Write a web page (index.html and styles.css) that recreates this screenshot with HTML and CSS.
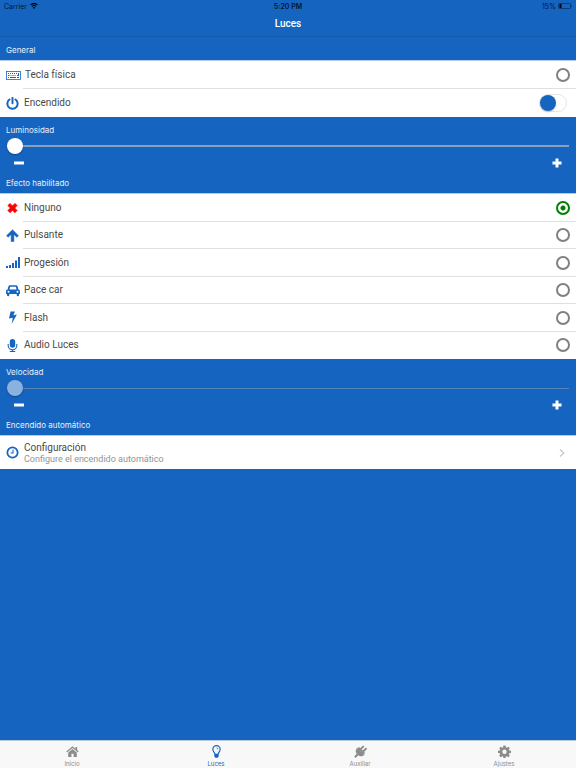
FILE: index.html
```
<!DOCTYPE html>
<html lang="es">
<head>
  <meta charset="utf-8">
  <meta name="viewport" content="width=device-width, initial-scale=1">
  <title>Luces</title>
  <link rel="stylesheet" href="styles.css">
</head>
<body>

  <header class="header">
    <div class="status-bar">
      <span class="status-left">Carrier
        <svg class="wifi" viewBox="0 0 16 12"><path d="M8 12l2.500-3a4 4 0 0 0-5 0zM4.300 7.600a6 6 0 0 1 7.400 0l1.400-1.700a8.200 8.200 0 0 0-10.200 0zM1.900 4.700a10 10 0 0 1 12.200 0L15.600 2.900a12 12 0 0 0-15.200 0z"/></svg>
      </span>
      <span class="status-time">5:20 PM</span>
      <span class="status-right">15%
        <svg class="battery" viewBox="0 0 28 12"><rect x="1" y="1" width="24" height="10" rx="2" fill="none" stroke="#0a2c57" stroke-width="1.400"/><rect x="3" y="2" width="4" height="8" fill="#000"/><path d="M26 4q2 2 0 4z"/></svg>
      </span>
    </div>
    <h1 class="title">Luces</h1>
  </header>

  <main class="content">
    <h2 class="list-header">General</h2>
    <div class="list list-general">
      <div class="item">
        <svg class="icon icon-keyboard" viewBox="0 0 30 18"><rect x="1" y="1" width="28" height="16" fill="none" stroke="#1565c0" stroke-width="1.600"/><path d="M4 4h2v2H4zM8 4h2v2H8zM12 4h2v2h-2zM16 4h2v2h-2zM20 4h2v2h-2zM24 4h2v6h-4V8h2zM4 8h3v2H4zM9 8h2v2H9zM13 8h2v2h-2zM17 8h2v2h-2zM4 12h2v2H4zM8 12h12v2H8zM22 12h4v2h-4z"/></svg>
        <label class="label" for="fisica">Tecla física</label>
        <input type="radio" class="radio" id="fisica" name="tecla">
      </div>
      <div class="item">
        <svg class="icon" viewBox="0 0 24 24"><path d="M6.500 4.500a9.500 9.500 0 1 0 11 0M12 1.500v10" fill="none" stroke="#1565c0" stroke-width="3.600" stroke-linecap="round"/></svg>
        <label class="label" for="encendido">Encendido</label>
        <input type="checkbox" class="toggle" id="encendido">
      </div>
    </div>

    <h2 class="list-header list-header-range"><label for="luminosidad">Luminosidad</label></h2>
    <div class="range">
      <input type="range" class="slider" id="luminosidad" min="0" max="100" value="0">
      <div class="range-buttons">
        <button type="button" class="step" aria-label="Menos"><svg viewBox="0 0 10 10"><path d="M0 3.500h10v3H0z"/></svg></button>
        <button type="button" class="step" aria-label="Más"><svg viewBox="0 0 10 10"><path d="M3.500.5h3v3h3v3h-3v3h-3v-3h-3v-3h3z"/></svg></button>
      </div>
    </div>

    <h2 class="list-header">Efecto habilitado</h2>
    <div class="list list-effects">
      <div class="item">
        <svg class="icon icon-red" viewBox="0 0 24 24"><path d="M3.500 8.500l4-4L12 9l4.500-4.500 4 4L16 13l4.500 4.500-4 4L12 17l-4.500 4.500-4-4L8 13z" stroke="#f00" stroke-width="1.500" stroke-linejoin="round"/></svg>
        <label class="label" for="ninguno">Ninguno</label>
        <input type="radio" class="radio" id="ninguno" name="efecto" checked>
      </div>
      <div class="item">
        <svg class="icon" viewBox="0 0 24 24"><path d="M12 1.500L23 12.300l-2.800 2.900-5.700-5.200V23h-5V10l-5.700 5.200L1 12.300z" stroke="#1565c0" stroke-linejoin="round"/></svg>
        <label class="label" for="pulsante">Pulsante</label>
        <input type="radio" class="radio" id="pulsante" name="efecto">
      </div>
      <div class="item">
        <svg class="icon icon-wide" viewBox="0 0 28 24"><path d="M0 19h4v4H0zM6 17h4v6H6zM12 13h4v10h-4zM18 8h4v15h-4zM24 1h4v22h-4z"/></svg>
        <label class="label" for="progresion">Progesión</label>
        <input type="radio" class="radio" id="progresion" name="efecto">
      </div>
      <div class="item">
        <svg class="icon icon-wide" viewBox="0 0 28 24"><path fill-rule="evenodd" d="M8 1.500h12q2.500 0 3.200 2.500l1.600 6q3.200.4 3.200 3.500v5.500h-2v2q0 2.500-2.300 2.500T21.400 21v-2H6.600v2q0 2.500-2.300 2.500T2 21v-2H0v-5.500Q0 10.400 3.200 10l1.600-6Q5.500 1.500 8 1.500zM8.300 4.500L6.900 10h14.200l-1.400-5.500zM5 12.500a2 2 0 1 0 0 4 2 2 0 0 0 0-4zM23 12.500a2 2 0 1 0 0 4 2 2 0 0 0 0-4z"/></svg>
        <label class="label" for="pace">Pace car</label>
        <input type="radio" class="radio" id="pace" name="efecto">
      </div>
      <div class="item">
        <svg class="icon" viewBox="0 0 24 24"><path d="M8.500 1h8l-3 7 6.500-1.500L10.500 24l2-11.500L5.500 14z"/></svg>
        <label class="label" for="flash">Flash</label>
        <input type="radio" class="radio" id="flash" name="efecto">
      </div>
      <div class="item">
        <svg class="icon" viewBox="0 0 24 24"><rect x="7" y="0" width="10" height="16" rx="5"/><path d="M4 9v3a8 8 0 0 0 16 0V9M12 19.500V23M7 23h10" fill="none" stroke="#1565c0" stroke-width="2"/></svg>
        <label class="label" for="audio">Audio Luces</label>
        <input type="radio" class="radio" id="audio" name="efecto">
      </div>
    </div>

    <h2 class="list-header list-header-range"><label for="velocidad">Velocidad</label></h2>
    <div class="range">
      <input type="range" class="slider" id="velocidad" min="0" max="100" value="0" disabled>
      <div class="range-buttons">
        <button type="button" class="step" aria-label="Menos"><svg viewBox="0 0 10 10"><path d="M0 3.500h10v3H0z"/></svg></button>
        <button type="button" class="step" aria-label="Más"><svg viewBox="0 0 10 10"><path d="M3.500.5h3v3h3v3h-3v3h-3v-3h-3v-3h3z"/></svg></button>
      </div>
    </div>

    <h2 class="list-header">Encendido automático</h2>
    <div class="list">
      <a class="item item-link" href="#configuracion">
        <svg class="icon" viewBox="0 0 24 24"><circle cx="12" cy="12" r="9.500" fill="none" stroke="#1565c0" stroke-width="3.200"/><path d="M13 6.500v6.300H8.500" fill="none" stroke="#1565c0" stroke-width="1.900"/></svg>
        <span class="label">Configuración
          <span class="note">Configure el encendido automático</span>
        </span>
        <svg class="chevron" viewBox="0 0 6 10"><path d="M1 1.500L4.700 5 1 8.500" fill="none" stroke="#c3c8d0" stroke-width="1.300"/></svg>
      </a>
    </div>
  </main>

  <nav class="tabs">
    <a class="tab" href="#inicio">
      <svg viewBox="0 0 24 24"><path d="M12 2.500L23.500 12l-1.500 2L12 5.700 2 14 .5 12zM17.500 3.500h3.200v6l-3.200-2.700zM12 7.500l8 6.700V22h-6v-6h-4v6H4v-7.800z"/></svg>
      Inicio
    </a>
    <a class="tab active" href="#luces">
      <svg viewBox="0 0 24 24"><path d="M9 17c0-3.500-3.800-4.500-3.800-9a6.800 6.800 0 0 1 13.600 0c0 4.500-3.800 5.500-3.800 9" fill="none" stroke="#1565c0" stroke-width="2.200"/><path d="M8 16h8v5l-2 2.500h-4L8 21zM12 4.500a3.500 3.500 0 0 1 3.500 3.500h-1.300A2.200 2.200 0 0 0 12 5.800z"/></svg>
      Luces
    </a>
    <a class="tab" href="#auxiliar">
      <svg viewBox="0 0 24 24"><path d="M6 5l13 13c-3.500 3.500-8.500 3.600-11.300 1L3 24 .2 21.200l4.800-5C2.400 13.400 2.500 8.500 6 5z"/><path d="M10.500 9.500L17 3M15 14l7-7" fill="none" stroke="#8c8c8c" stroke-width="3.600" stroke-linecap="round"/><path d="M6 5l4-1 10 10-1 4z"/></svg>
      Auxiliar
    </a>
    <a class="tab" href="#ajustes">
      <svg viewBox="0 0 24 24"><path fill-rule="evenodd" d="M10 1h4l.6 3.200 1.700.7L19 3l2.800 2.800-1.800 2.700.7 1.700 3.300.6v4l-3.300.6-.7 1.700 1.800 2.700L19 22.500l-2.700-1.800-1.700.7L14 24h-4l-.6-2.600-1.700-.7L5 22.500l-2.800-2.700L4 17.100l-.7-1.700L0 14.800v-4l3.300-.6L4 8.500 2.200 5.800 5 3l2.700 1.900 1.700-.7zM12 8.500a4 4 0 1 0 0 8 4 4 0 0 0 0-8z"/></svg>
      Ajustes
    </a>
  </nav>

</body>
</html>
```

FILE: styles.css
```
* {
  box-sizing: border-box;
}

body {
  margin: 0;
  min-height: 100vh;
  display: flex;
  flex-direction: column;
  background-color: #1565c0;
  font-family: Inter, Roboto, "Liberation Sans", sans-serif;
  font-size: 8px;
}

svg {
  display: block;
}

/* header */
.header {
  border-bottom: 1px solid #165cae;
}

.status-bar {
  display: grid;
  grid-template-columns: 1fr auto 1fr;
  align-items: center;
  height: 12px;
  padding: 0 4px;
  font-size: 7px;
  color: #04162c;
}

.status-left,
.status-right {
  display: flex;
  align-items: center;
  gap: 3px;
}

.status-right {
  justify-content: flex-end;
  gap: 2px;
}

.status-time {
  font-weight: 600;
}

.wifi {
  width: 8px;
  height: 6px;
}

.battery {
  width: 14px;
  height: 6px;
}

.title {
  margin: 0;
  line-height: 24px;
  font-family: Roboto, "Liberation Sans", sans-serif;
  font-size: 10px;
  font-weight: 500;
  text-align: center;
  color: #fff;
}

/* lists */
.content {
  flex: 1;
}

.list-header {
  margin: 0;
  padding: 7px 6px 4px;
  line-height: 12px;
  font-size: 8px;
  font-weight: 400;
  color: #e8f0f9;
}

.list-header-range {
  padding-bottom: 2px;
}

.list {
  display: grid;
  grid-auto-rows: 1fr;
  background-color: #fff;
  border-top: 1px solid #b5cbe7;
}

.list-general {
  min-height: 57px;
}

.list-effects {
  min-height: 166px;
}

.item {
  display: flex;
  align-items: center;
  padding: 0 6px;
  font-family: Roboto, "Liberation Sans", sans-serif;
  font-size: 10px;
  color: #4a4a4a;
  background: linear-gradient(#dedfe1, #dedfe1) 23px 100% / 100% 1px no-repeat;
}

.item:last-child {
  background: none;
}

.icon {
  width: 13px;
  height: 13px;
  margin-right: 5px;
  fill: #1565c0;
}

.icon-wide {
  width: 14px;
  margin-right: 4px;
}

.icon-keyboard {
  width: 15px;
  margin-right: 4px;
}

.icon-red {
  fill: #f00;
}

.label {
  flex: 1;
  line-height: 12px;
}

.note {
  display: block;
  line-height: 10px;
  font-size: 9px;
  color: #8e9499;
}

.item-link {
  min-height: 33px;
  text-decoration: none;
}

.chevron {
  width: 6px;
  height: 10px;
  margin-right: 5px;
}

.radio {
  appearance: none;
  width: 14px;
  height: 14px;
  margin: 0;
  border: 2px solid #808080;
  border-radius: 50%;
}

.radio:checked {
  border-color: #008000;
  background: radial-gradient(circle, #008000 2px, #fff 3px);
}

.toggle {
  appearance: none;
  width: 28px;
  height: 18px;
  margin: 0 3px 0 0;
  border: 1px solid #e6e6e6;
  border-radius: 9px;
  background-color: #fff;
}

.toggle::before {
  content: "";
  display: block;
  width: 16px;
  height: 16px;
  border-radius: 50%;
  background-color: #1565c0;
  box-shadow: 0 1px 2px rgba(0, 0, 0, 0.2);
}

.toggle:checked::before {
  margin-left: auto;
}

/* sliders */
.range {
  padding: 0 7px 2px;
}

.slider {
  appearance: none;
  display: block;
  width: 100%;
  height: 16px;
  margin: 0;
  background: linear-gradient(#8c9fb6, #8c9fb6) center / 100% 2px no-repeat;
}

.slider::-webkit-slider-thumb {
  appearance: none;
  width: 16px;
  height: 16px;
  border-radius: 50%;
  background-color: #fff;
  box-shadow: 0 1px 2px rgba(0, 0, 0, 0.3);
}

.slider:disabled {
  background: linear-gradient(#5583b9, #5583b9) center / 100% 1px no-repeat;
}

.slider:disabled::-webkit-slider-thumb {
  background-color: #8ab2e0;
}

.range-buttons {
  display: flex;
  justify-content: space-between;
  padding: 4px 7px 0;
}

.step {
  padding: 0;
  border: 0;
  background: none;
}

.step svg {
  width: 10px;
  height: 10px;
  fill: #fff;
}

/* bottom tabs */
.tabs {
  display: flex;
  background-color: #f8f8f8;
  border-top: 1px solid #b9c9dd;
}

.tab {
  flex: 1;
  display: flex;
  flex-direction: column;
  align-items: center;
  gap: 2px;
  padding: 4px 0 0;
  line-height: 8px;
  font-size: 6px;
  color: #8c8c8c;
  fill: #8c8c8c;
  text-decoration: none;
}

.tab svg {
  width: 13px;
  height: 13px;
}

.tab.active {
  color: #1565c0;
  fill: #1565c0;
}
```
